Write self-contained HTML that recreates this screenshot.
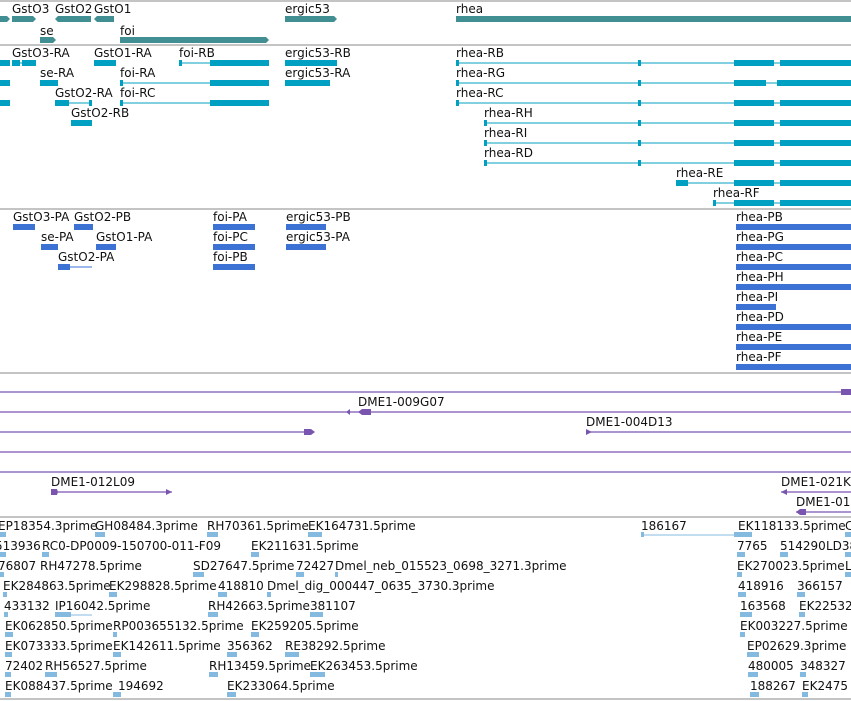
<!DOCTYPE html>
<html><head><meta charset="utf-8"><style>
html,body{margin:0;padding:0;background:#fff;width:851px;height:701px;overflow:hidden}
svg{display:block}
text{font-family:"DejaVu Sans","Liberation Sans",sans-serif;font-size:12px;fill:#111}
.g{fill:#418e93}.t{fill:#00a0c2}.p{fill:#3b72d4}.u{fill:#7a55b0}.e{fill:#84b9e0}
.tl{stroke:#00a0c2;stroke-width:1}.pl{stroke:#3b72d4}.ul{stroke:#7a55b0;stroke-width:1.3}.el{stroke:#84b9e0}
.sep{stroke:#c4c4c4;stroke-width:2}
</style></head><body>
<svg width="851" height="701" viewBox="0 0 851 701" xmlns="http://www.w3.org/2000/svg">
<line class="sep" x1="0" y1="1" x2="851" y2="1"/>
<line class="sep" x1="0" y1="45" x2="851" y2="45"/>
<line class="sep" x1="0" y1="209" x2="851" y2="209"/>
<line class="sep" x1="0" y1="373" x2="851" y2="373"/>
<line class="sep" x1="0" y1="517" x2="851" y2="517"/>
<line class="sep" x1="0" y1="699" x2="851" y2="699"/>

<!-- genes -->
<text x="12" y="13">GstO3</text><text x="55" y="13">GstO2</text><text x="94" y="13">GstO1</text>
<text x="285" y="13">ergic53</text><text x="456" y="13">rhea</text>
<polygon class="g" points="0,16 7,16 10,19 7,22 0,22"/>
<polygon class="g" points="12,16 33,16 36,19 33,22 12,22"/>
<polygon class="g" points="58,16 91,16 91,22 58,22 55,19"/>
<polygon class="g" points="97,16 114,16 114,22 97,22 94,19"/>
<polygon class="g" points="285,16 334,16 337,19 334,22 285,22"/>
<rect class="g" x="456" y="16" width="395" height="6"/>
<text x="40" y="35">se</text><text x="120" y="35">foi</text>
<polygon class="g" points="40,37 53,37 56,40 53,43 40,43"/>
<polygon class="g" points="120,37 266,37 269,40 266,43 120,43"/>

<!-- transcripts -->
<g>
<text x="12" y="57">GstO3-RA</text><text x="94" y="57">GstO1-RA</text><text x="179" y="57">foi-RB</text><text x="285" y="57">ergic53-RB</text><text x="456" y="57">rhea-RB</text>
<rect class="t" x="0" y="60" width="10" height="6"/>
<rect class="t" x="12" y="60" width="8" height="6"/><line class="tl" x1="12" y1="63" x2="36" y2="63"/><rect class="t" x="22" y="60" width="14" height="6"/>
<rect class="t" x="94" y="60" width="22" height="6"/>
<line class="tl" x1="179" y1="63" x2="269" y2="63"/><rect class="t" x="179" y="60" width="3" height="6"/><rect class="t" x="210" y="60" width="59" height="6"/>
<rect class="t" x="285" y="60" width="52" height="6"/>
<line class="tl" x1="456" y1="63" x2="851" y2="63"/><rect class="t" x="456" y="60" width="3" height="6"/><rect class="t" x="638" y="60" width="3" height="6"/><rect class="t" x="734" y="60" width="40" height="6"/><rect class="t" x="780" y="60" width="71" height="6"/>

<text x="40" y="77">se-RA</text><text x="120" y="77">foi-RA</text><text x="285" y="77">ergic53-RA</text><text x="456" y="77">rhea-RG</text>
<rect class="t" x="0" y="80" width="10" height="6"/>
<rect class="t" x="40" y="80" width="18" height="6"/>
<line class="tl" x1="120" y1="83" x2="269" y2="83"/><rect class="t" x="120" y="80" width="3" height="6"/><rect class="t" x="210" y="80" width="59" height="6"/>
<rect class="t" x="285" y="80" width="45" height="6"/>
<line class="tl" x1="456" y1="83" x2="851" y2="83"/><rect class="t" x="456" y="80" width="3" height="6"/><rect class="t" x="638" y="80" width="3" height="6"/><rect class="t" x="734" y="80" width="32" height="6"/><rect class="t" x="777" y="80" width="74" height="6"/>

<text x="55" y="97">GstO2-RA</text><text x="120" y="97">foi-RC</text><text x="456" y="97">rhea-RC</text>
<rect class="t" x="0" y="100" width="10" height="6"/>
<line class="tl" x1="55" y1="103" x2="92" y2="103"/><rect class="t" x="55" y="100" width="14" height="6"/><rect class="t" x="89" y="100" width="3" height="6"/>
<line class="tl" x1="120" y1="103" x2="269" y2="103"/><rect class="t" x="120" y="100" width="3" height="6"/><rect class="t" x="210" y="100" width="59" height="6"/>
<line class="tl" x1="456" y1="103" x2="851" y2="103"/><rect class="t" x="456" y="100" width="3" height="6"/><rect class="t" x="638" y="100" width="3" height="6"/><rect class="t" x="734" y="100" width="40" height="6"/><rect class="t" x="780" y="100" width="71" height="6"/>

<text x="71" y="117">GstO2-RB</text><text x="484" y="117">rhea-RH</text>
<rect class="t" x="71" y="120" width="21" height="6"/>
<line class="tl" x1="484" y1="123" x2="851" y2="123"/><rect class="t" x="484" y="120" width="3" height="6"/><rect class="t" x="638" y="120" width="3" height="6"/><rect class="t" x="734" y="120" width="40" height="6"/><rect class="t" x="780" y="120" width="71" height="6"/>
<text x="484" y="137">rhea-RI</text>
<line class="tl" x1="484" y1="143" x2="851" y2="143"/><rect class="t" x="484" y="140" width="3" height="6"/><rect class="t" x="638" y="140" width="3" height="6"/><rect class="t" x="734" y="140" width="40" height="6"/><rect class="t" x="780" y="140" width="71" height="6"/>
<text x="484" y="157">rhea-RD</text>
<line class="tl" x1="484" y1="163" x2="851" y2="163"/><rect class="t" x="484" y="160" width="3" height="6"/><rect class="t" x="638" y="160" width="3" height="6"/><rect class="t" x="734" y="160" width="40" height="6"/><rect class="t" x="780" y="160" width="71" height="6"/>
<text x="676" y="177">rhea-RE</text>
<line class="tl" x1="676" y1="183" x2="851" y2="183"/><rect class="t" x="676" y="180" width="12" height="6"/><rect class="t" x="734" y="180" width="40" height="6"/><rect class="t" x="780" y="180" width="71" height="6"/>
<text x="713" y="197">rhea-RF</text>
<line class="tl" x1="713" y1="203" x2="851" y2="203"/><rect class="t" x="713" y="200" width="3" height="6"/><rect class="t" x="734" y="200" width="40" height="6"/><rect class="t" x="780" y="200" width="71" height="6"/>
</g>

<!-- proteins -->
<g>
<text x="13" y="221">GstO3-PA</text><text x="74" y="221">GstO2-PB</text><text x="213" y="221">foi-PA</text><text x="286" y="221">ergic53-PB</text><text x="736" y="221">rhea-PB</text>
<rect class="p" x="13" y="224" width="22" height="6"/><rect class="p" x="74" y="224" width="19" height="6"/><rect class="p" x="213" y="224" width="42" height="6"/><rect class="p" x="286" y="224" width="40" height="6"/><rect class="p" x="736" y="224" width="115" height="6"/>
<text x="41" y="241">se-PA</text><text x="96" y="241">GstO1-PA</text><text x="213" y="241">foi-PC</text><text x="286" y="241">ergic53-PA</text><text x="736" y="241">rhea-PG</text>
<rect class="p" x="41" y="244" width="17" height="6"/><rect class="p" x="96" y="244" width="20" height="6"/><rect class="p" x="213" y="244" width="42" height="6"/><rect class="p" x="286" y="244" width="40" height="6"/><rect class="p" x="736" y="244" width="115" height="6"/>
<text x="58" y="261">GstO2-PA</text><text x="213" y="261">foi-PB</text><text x="736" y="261">rhea-PC</text>
<line class="pl" x1="58" y1="267" x2="92" y2="267"/><rect class="p" x="58" y="264" width="12" height="6"/><rect class="p" x="213" y="264" width="42" height="6"/><rect class="p" x="736" y="264" width="115" height="6"/>
<text x="736" y="281">rhea-PH</text><rect class="p" x="736" y="284" width="115" height="6"/>
<text x="736" y="301">rhea-PI</text><rect class="p" x="736" y="304" width="40" height="6"/>
<text x="736" y="321">rhea-PD</text><rect class="p" x="736" y="324" width="115" height="6"/>
<text x="736" y="341">rhea-PE</text><rect class="p" x="736" y="344" width="115" height="6"/>
<text x="736" y="361">rhea-PF</text><rect class="p" x="736" y="364" width="115" height="6"/>
</g>

<!-- purple clones -->
<g>
<line class="ul" x1="0" y1="392" x2="851" y2="392"/><polygon class="u" points="841,389 851,389 851,395 841,395"/>
<text x="358" y="406">DME1-009G07</text>
<line class="ul" x1="0" y1="412" x2="851" y2="412"/><polygon class="u" points="346,412 350,409 350,415"/><polygon class="u" points="358,412 362,409 371,409 371,415 362,415"/>
<line class="ul" x1="0" y1="432" x2="313" y2="432"/><polygon class="u" points="304,429 311,429 315,432 311,435 304,435"/>
<text x="586" y="426">DME1-004D13</text>
<line class="ul" x1="586" y1="432" x2="851" y2="432"/><polygon class="u" points="586,429 592,432 586,435"/>
<line class="ul" x1="0" y1="452" x2="851" y2="452"/>
<line class="ul" x1="0" y1="472" x2="851" y2="472"/>
<text x="51" y="486">DME1-012L09</text>
<line class="ul" x1="51" y1="492" x2="172" y2="492"/><polygon class="u" points="51,489 57,489 58,492 57,495 51,495"/><polygon class="u" points="166,489 172,492 166,495"/>
<text x="781" y="486">DME1-021K</text>
<line class="ul" x1="781" y1="492" x2="851" y2="492"/><polygon class="u" points="781,492 787,489 787,495"/>
<text x="796" y="506">DME1-01</text>
<line class="ul" x1="796" y1="512" x2="851" y2="512"/><polygon class="u" points="796,512 800,509 806,509 806,515 800,515"/>
</g>

<!-- ESTs -->
<g>
<text x="-2" y="530">EP18354.3prime</text><text x="95" y="530">GH08484.3prime</text><text x="207" y="530">RH70361.5prime</text><text x="308" y="530">EK164731.5prime</text><text x="641" y="530">186167</text><text x="738" y="530">EK118133.5prime</text><text x="845" y="530">C</text>
<rect class="e" x="0" y="532" width="6" height="5"/><rect class="e" x="95" y="532" width="10" height="5"/><rect class="e" x="207" y="532" width="11" height="5"/><rect class="e" x="308" y="532" width="14" height="5"/><line class="el" x1="641" y1="535" x2="750" y2="535"/><rect class="e" x="641" y="532" width="3" height="5"/><rect class="e" x="734" y="532" width="18" height="5"/><rect class="e" x="845" y="532" width="6" height="5"/>

<text x="-5" y="550">513936</text><text x="42" y="550">RC0-DP0009-150700-011-F09</text><text x="251" y="550">EK211631.5prime</text><text x="737" y="550">7765</text><text x="780" y="550">514290</text><text x="826" y="550">LD38</text>
<rect class="e" x="0" y="552" width="6" height="5"/><rect class="e" x="42" y="552" width="7" height="5"/><rect class="e" x="251" y="552" width="8" height="5"/><rect class="e" x="737" y="552" width="8" height="5"/><rect class="e" x="780" y="552" width="8" height="5"/><rect class="e" x="845" y="552" width="6" height="5"/>

<text x="-2" y="570">76807</text><text x="40" y="570">RH47278.5prime</text><text x="193" y="570">SD27647.5prime</text><text x="296" y="570">72427</text><text x="335" y="570">Dmel_neb_015523_0698_3271.3prime</text><text x="737" y="570">EK270023.5prime</text><text x="845" y="570">L</text>
<rect class="e" x="0" y="572" width="4" height="5"/><rect class="e" x="193" y="572" width="11" height="5"/><rect class="e" x="296" y="572" width="8" height="5"/><rect class="e" x="335" y="572" width="3" height="5"/><rect class="e" x="737" y="572" width="5" height="5"/><rect class="e" x="845" y="572" width="6" height="5"/>

<text x="3" y="590">EK284863.5prime</text><text x="109" y="590">EK298828.5prime</text><text x="218" y="590">418810</text><text x="267" y="590">Dmel_dig_000447_0635_3730.3prime</text><text x="738" y="590">418916</text><text x="797" y="590">366157</text>
<rect class="e" x="3" y="592" width="4" height="5"/><rect class="e" x="109" y="592" width="8" height="5"/><rect class="e" x="218" y="592" width="9" height="5"/><rect class="e" x="267" y="592" width="4" height="5"/><rect class="e" x="738" y="592" width="8" height="5"/><rect class="e" x="797" y="592" width="8" height="5"/>

<text x="4" y="610">433132</text><text x="55" y="610">IP16042.5prime</text><text x="208" y="610">RH42663.5prime</text><text x="310" y="610">381107</text><text x="740" y="610">163568</text><text x="799" y="610">EK22532</text>
<rect class="e" x="4" y="612" width="4" height="5"/><line class="el" x1="55" y1="615" x2="92" y2="615"/><rect class="e" x="55" y="612" width="16" height="5"/><rect class="e" x="208" y="612" width="10" height="5"/><rect class="e" x="310" y="612" width="13" height="5"/><rect class="e" x="740" y="612" width="12" height="5"/><rect class="e" x="799" y="612" width="6" height="5"/>

<text x="5" y="630">EK062850.5prime</text><text x="113" y="630">RP003655132.5prime</text><text x="251" y="630">EK259205.5prime</text><text x="740" y="630">EK003227.5prime</text>
<rect class="e" x="5" y="632" width="8" height="5"/><rect class="e" x="113" y="632" width="4" height="5"/><rect class="e" x="251" y="632" width="8" height="5"/><rect class="e" x="740" y="632" width="5" height="5"/>

<text x="5" y="650">EK073333.5prime</text><text x="113" y="650">EK142611.5prime</text><text x="227" y="650">356362</text><text x="285" y="650">RE38292.5prime</text><text x="747" y="650">EP02629.3prime</text>
<rect class="e" x="5" y="652" width="7" height="5"/><rect class="e" x="113" y="652" width="8" height="5"/><rect class="e" x="227" y="652" width="10" height="5"/><rect class="e" x="285" y="652" width="14" height="5"/><rect class="e" x="747" y="652" width="12" height="5"/>

<text x="5" y="670">72402</text><text x="45" y="670">RH56527.5prime</text><text x="209" y="670">RH13459.5prime</text><text x="310" y="670">EK263453.5prime</text><text x="748" y="670">480005</text><text x="800" y="670">348327</text>
<rect class="e" x="5" y="672" width="6" height="5"/><rect class="e" x="45" y="672" width="12" height="5"/><rect class="e" x="209" y="672" width="9" height="5"/><rect class="e" x="310" y="672" width="15" height="5"/><rect class="e" x="748" y="672" width="10" height="5"/><rect class="e" x="800" y="672" width="6" height="5"/>

<text x="5" y="690">EK088437.5prime</text><text x="118" y="690">194692</text><text x="227" y="690">EK233064.5prime</text><text x="750" y="690">188267</text><text x="802" y="690">EK2475</text>
<rect class="e" x="5" y="692" width="6" height="5"/><rect class="e" x="113" y="692" width="8" height="5"/><rect class="e" x="227" y="692" width="9" height="5"/><rect class="e" x="750" y="692" width="9" height="5"/><rect class="e" x="802" y="692" width="6" height="5"/>
</g>
</svg>
</body></html>
